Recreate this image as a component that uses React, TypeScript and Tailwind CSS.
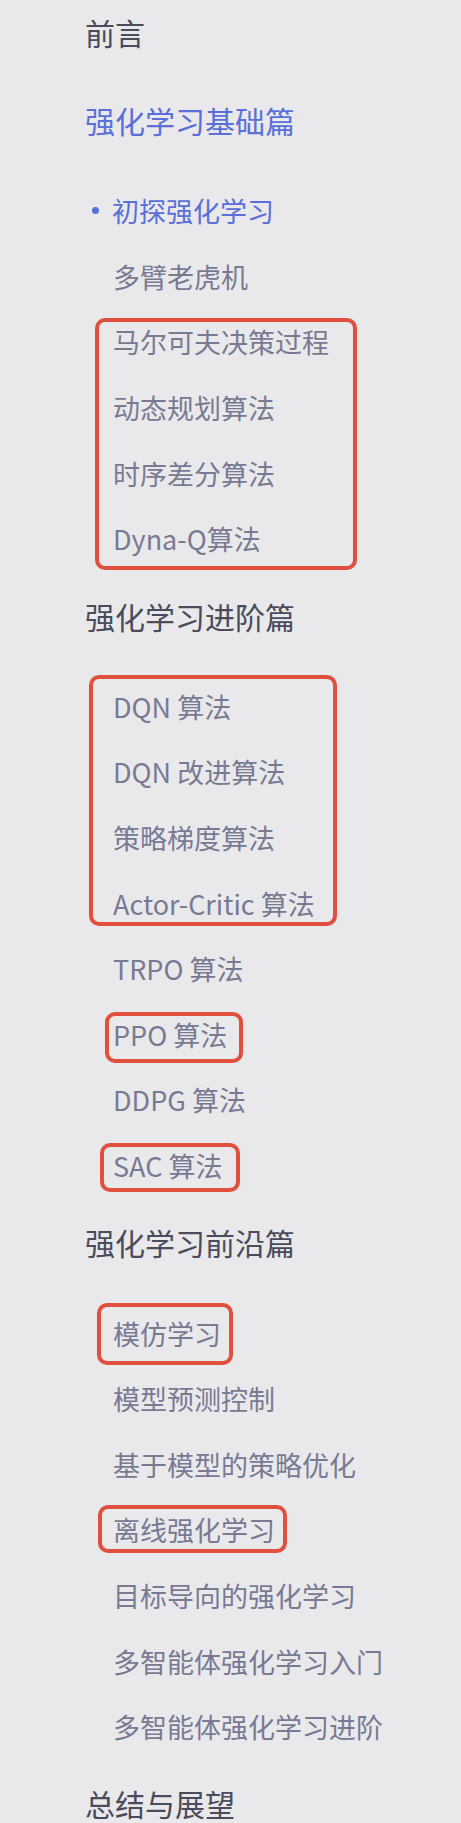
import React from 'react';

type Box = { top: number; left: number; width: number; height: number };

type Item = { label: string; active?: boolean };

type Group = { items: Item[]; box?: Box };

type Section = { title: string; active?: boolean; groups: Group[] };

const sections: Section[] = [
  {
    title: '强化学习基础篇',
    active: true,
    groups: [
      { items: [{ label: '初探强化学习', active: true }, { label: '多臂老虎机' }] },
      {
        items: [
          { label: '马尔可夫决策过程' },
          { label: '动态规划算法' },
          { label: '时序差分算法' },
          { label: 'Dyna-Q算法' },
        ],
        box: { top: 9, left: 10, width: 262, height: 252 },
      },
    ],
  },
  {
    title: '强化学习进阶篇',
    groups: [
      {
        items: [
          { label: 'DQN 算法' },
          { label: 'DQN 改进算法' },
          { label: '策略梯度算法' },
          { label: 'Actor-Critic 算法' },
        ],
        box: { top: 1, left: 4, width: 248, height: 251 },
      },
      { items: [{ label: 'TRPO 算法' }] },
      { items: [{ label: 'PPO 算法' }], box: { top: 10, left: 20, width: 138, height: 51 } },
      { items: [{ label: 'DDPG 算法' }] },
      { items: [{ label: 'SAC 算法' }], box: { top: 10, left: 15, width: 140, height: 49 } },
    ],
  },
  {
    title: '强化学习前沿篇',
    groups: [
      { items: [{ label: '模仿学习' }], box: { top: 3, left: 12, width: 136, height: 62 } },
      { items: [{ label: '模型预测控制' }, { label: '基于模型的策略优化' }] },
      { items: [{ label: '离线强化学习' }], box: { top: 8, left: 13, width: 189, height: 48 } },
      {
        items: [
          { label: '目标导向的强化学习' },
          { label: '多智能体强化学习入门' },
          { label: '多智能体强化学习进阶' },
        ],
      },
    ],
  },
];

function Row({ item }: { item: Item }) {
  if (item.active) {
    return (
      <div className="h-[65.6px] flex items-center pl-[7px] text-[27px] leading-none text-[#5a70d8]">
        <span className="w-[7px] h-[7px] rounded-full bg-[#5a70d8] mr-[13px] shrink-0" />
        <span>{item.label}</span>
      </div>
    );
  }
  return (
    <div className="h-[65.6px] flex items-center pl-[28px] text-[27px] leading-none text-[#787a93]">
      {item.label}
    </div>
  );
}

export default function App() {
  return (
    <div
      className="min-h-[1823px] w-full bg-[#e9e9eb] pl-[85px] overflow-hidden"
      style={{ fontFamily: '"Noto Sans CJK SC", "Noto Sans", sans-serif' }}
    >
      <div className="h-[76px] pb-[12px] flex items-center text-[30px] leading-none text-[#4a4b5d]">前言</div>
      {sections.map((s) => (
        <div key={s.title}>
          <div
            className={
              s.active
                ? 'h-[88px] flex items-center text-[30px] leading-none text-[#5a70d8]'
                : 'h-[88px] flex items-center text-[30px] leading-none text-[#4a4b5d]'
            }
          >
            {s.title}
          </div>
          <div className="pt-[14px]">
            {s.groups.map((g, gi) => (
              <div key={gi} className="relative">
                {g.items.map((it) => (
                  <Row key={it.label} item={it} />
                ))}
                {g.box && (
                  <span
                    className="absolute border-[4px] border-[#e1503f] rounded-[10px] pointer-events-none"
                    style={{ top: g.box.top, left: g.box.left, width: g.box.width, height: g.box.height }}
                  />
                )}
              </div>
            ))}
          </div>
        </div>
      ))}
      <div className="h-[88px] flex items-center text-[30px] leading-none text-[#4a4b5d]">总结与展望</div>
    </div>
  );
}
